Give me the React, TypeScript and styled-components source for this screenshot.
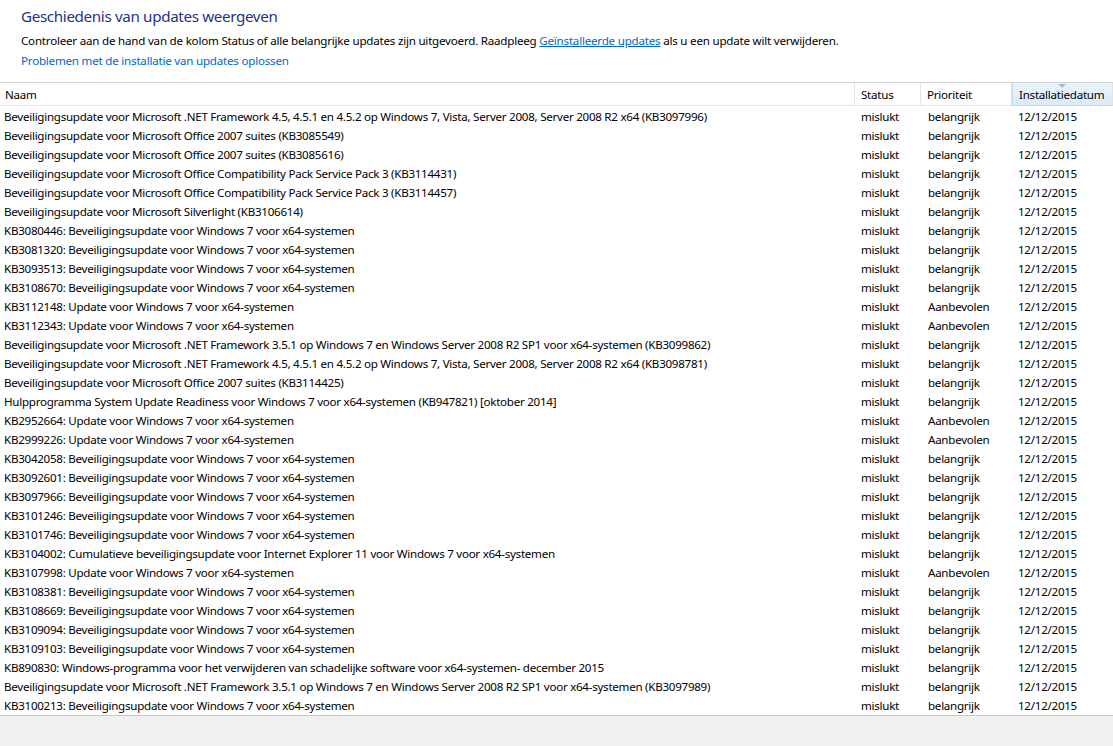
import * as React from 'react';
import styled, { createGlobalStyle } from 'styled-components';

interface Update {
  name: string;
  priority: string;
}

const B = 'belangrijk';
const A = 'Aanbevolen';

const updates: Update[] = [
  { name: 'Beveiligingsupdate voor Microsoft .NET Framework 4.5, 4.5.1 en 4.5.2 op Windows 7, Vista, Server 2008, Server 2008 R2 x64 (KB3097996)', priority: B },
  { name: 'Beveiligingsupdate voor Microsoft Office 2007 suites (KB3085549)', priority: B },
  { name: 'Beveiligingsupdate voor Microsoft Office 2007 suites (KB3085616)', priority: B },
  { name: 'Beveiligingsupdate voor Microsoft Office Compatibility Pack Service Pack 3 (KB3114431)', priority: B },
  { name: 'Beveiligingsupdate voor Microsoft Office Compatibility Pack Service Pack 3 (KB3114457)', priority: B },
  { name: 'Beveiligingsupdate voor Microsoft Silverlight (KB3106614)', priority: B },
  { name: 'KB3080446: Beveiligingsupdate voor Windows 7 voor x64-systemen', priority: B },
  { name: 'KB3081320: Beveiligingsupdate voor Windows 7 voor x64-systemen', priority: B },
  { name: 'KB3093513: Beveiligingsupdate voor Windows 7 voor x64-systemen', priority: B },
  { name: 'KB3108670: Beveiligingsupdate voor Windows 7 voor x64-systemen', priority: B },
  { name: 'KB3112148: Update voor Windows 7 voor x64-systemen', priority: A },
  { name: 'KB3112343: Update voor Windows 7 voor x64-systemen', priority: A },
  { name: 'Beveiligingsupdate voor Microsoft .NET Framework 3.5.1 op Windows 7 en Windows Server 2008 R2 SP1 voor x64-systemen (KB3099862)', priority: B },
  { name: 'Beveiligingsupdate voor Microsoft .NET Framework 4.5, 4.5.1 en 4.5.2 op Windows 7, Vista, Server 2008, Server 2008 R2 x64 (KB3098781)', priority: B },
  { name: 'Beveiligingsupdate voor Microsoft Office 2007 suites (KB3114425)', priority: B },
  { name: 'Hulpprogramma System Update Readiness voor Windows 7 voor x64-systemen (KB947821) [oktober 2014]', priority: B },
  { name: 'KB2952664: Update voor Windows 7 voor x64-systemen', priority: A },
  { name: 'KB2999226: Update voor Windows 7 voor x64-systemen', priority: A },
  { name: 'KB3042058: Beveiligingsupdate voor Windows 7 voor x64-systemen', priority: B },
  { name: 'KB3092601: Beveiligingsupdate voor Windows 7 voor x64-systemen', priority: B },
  { name: 'KB3097966: Beveiligingsupdate voor Windows 7 voor x64-systemen', priority: B },
  { name: 'KB3101246: Beveiligingsupdate voor Windows 7 voor x64-systemen', priority: B },
  { name: 'KB3101746: Beveiligingsupdate voor Windows 7 voor x64-systemen', priority: B },
  { name: 'KB3104002: Cumulatieve beveiligingsupdate voor Internet Explorer 11 voor Windows 7 voor x64-systemen', priority: B },
  { name: 'KB3107998: Update voor Windows 7 voor x64-systemen', priority: A },
  { name: 'KB3108381: Beveiligingsupdate voor Windows 7 voor x64-systemen', priority: B },
  { name: 'KB3108669: Beveiligingsupdate voor Windows 7 voor x64-systemen', priority: B },
  { name: 'KB3109094: Beveiligingsupdate voor Windows 7 voor x64-systemen', priority: B },
  { name: 'KB3109103: Beveiligingsupdate voor Windows 7 voor x64-systemen', priority: B },
  { name: 'KB890830: Windows-programma voor het verwijderen van schadelijke software voor x64-systemen- december 2015', priority: B },
  { name: 'Beveiligingsupdate voor Microsoft .NET Framework 3.5.1 op Windows 7 en Windows Server 2008 R2 SP1 voor x64-systemen (KB3097989)', priority: B },
  { name: 'KB3100213: Beveiligingsupdate voor Windows 7 voor x64-systemen', priority: B },
];

const columns = '855px 66px 91px 1fr';

export default function App() {
  return (
    <>
      <GlobalStyle />
      <StyledPage>
        <StyledIntro>
          <StyledTitle>Geschiedenis van updates weergeven</StyledTitle>
          <StyledText>
            Controleer aan de hand van de kolom Status of alle belangrijke updates zijn uitgevoerd. Raadpleeg{' '}
            <StyledLink underline>Geïnstalleerde updates</StyledLink> als u een update wilt verwijderen.
          </StyledText>
          <StyledLink>Problemen met de installatie van updates oplossen</StyledLink>
        </StyledIntro>

        <StyledTable>
          <StyledHeader>
            <StyledHeadCell>Naam</StyledHeadCell>
            <StyledHeadCell>Status</StyledHeadCell>
            <StyledHeadCell>Prioriteit</StyledHeadCell>
            <StyledHeadCell sorted>
              <StyledSortArrow />
              Installatiedatum
            </StyledHeadCell>
          </StyledHeader>
          <StyledBody>
            {updates.map((u, i) => (
              <StyledRow key={i}>
                <StyledCell first>{u.name}</StyledCell>
                <StyledCell>mislukt</StyledCell>
                <StyledCell>{u.priority}</StyledCell>
                <StyledCell>12/12/2015</StyledCell>
              </StyledRow>
            ))}
          </StyledBody>
        </StyledTable>

        <StyledFooter />
      </StyledPage>
    </>
  );
}

const GlobalStyle = createGlobalStyle`
  html, body {
    margin: 0;
    padding: 0;
    background: #ffffff;
  }
  body {
    font-family: 'Segoe UI', 'Noto Sans', 'Liberation Sans', sans-serif;
    font-size: 12px;
    color: #000;
  }
`;

const StyledPage = styled.div`
  width: 1113px;
  height: 746px;
  display: flex;
  flex-direction: column;
  overflow: hidden;
`;

const StyledIntro = styled.div`
  padding: 5px 0 0 21px;
  height: 77px;
  box-sizing: border-box;
  display: flex;
  flex-direction: column;
`;

const StyledTitle = styled.div`
  font-size: 15.2px;
  color: #1e3287;
  line-height: 22px;
  margin-bottom: 4px;
  letter-spacing: -0.35px;
`;

const StyledText = styled.div`
  font-size: 11.6px;
  line-height: 19px;
  letter-spacing: -0.22px;
`;

const StyledLink = styled.span<{ underline?: boolean }>`
  color: #0066cc;
  font-size: 11.6px;
  line-height: 19px;
  letter-spacing: -0.22px;
  margin-top: ${p => (p.underline ? '0' : '1px')};
  text-decoration: ${p => (p.underline ? 'underline' : 'none')};
`;

const StyledTable = styled.div`
  flex: 1;
  display: flex;
  flex-direction: column;
  border-top: 1px solid #d5d5d5;
  margin-top: 5px;
`;

const StyledHeader = styled.div`
  display: grid;
  grid-template-columns: ${columns};
  height: 23px;
`;

const StyledHeadCell = styled.div<{ sorted?: boolean }>`
  position: relative;
  display: flex;
  align-items: center;
  padding-left: ${p => (p.sorted ? '6px' : '5px')};
  font-size: 11.6px;
  letter-spacing: -0.25px;
  border-right: 1px solid #e3e3e3;
  background: ${p => (p.sorted ? 'linear-gradient(#eaf4fc, #dbeaf7)' : '#ffffff')};
  border-left: ${p => (p.sorted ? '1px solid #c0dcf3' : 'none')};
  border-bottom: 1px solid ${p => (p.sorted ? '#c0dcf3' : '#e5e5e5')};
  &:nth-child(2),
  &:nth-child(3) {
    padding-left: 6px;
  }
`;

const StyledSortArrow = styled.span`
  position: absolute;
  top: 1px;
  left: 45px;
  width: 0;
  height: 0;
  border-left: 4px solid transparent;
  border-right: 4px solid transparent;
  border-top: 4px solid #a6bdd6;
`;

const StyledBody = styled.div`
  padding-top: 1px;
  height: 609px;
  box-sizing: border-box;
  overflow: hidden;
`;

const StyledRow = styled.div`
  display: grid;
  grid-template-columns: ${columns};
  height: 19px;
  align-items: center;
`;

const StyledCell = styled.div<{ first?: boolean }>`
  padding-left: ${p => (p.first ? '4px' : '6px')};
  font-size: 11.6px;
  letter-spacing: -0.27px;
  white-space: nowrap;
  overflow: hidden;
  &:nth-child(3) {
    padding-left: 7px;
  }
`;

const StyledFooter = styled.div`
  flex: 1;
  background: #f0f0f0;
  border-top: 1px solid #c9c9c9;
`;
